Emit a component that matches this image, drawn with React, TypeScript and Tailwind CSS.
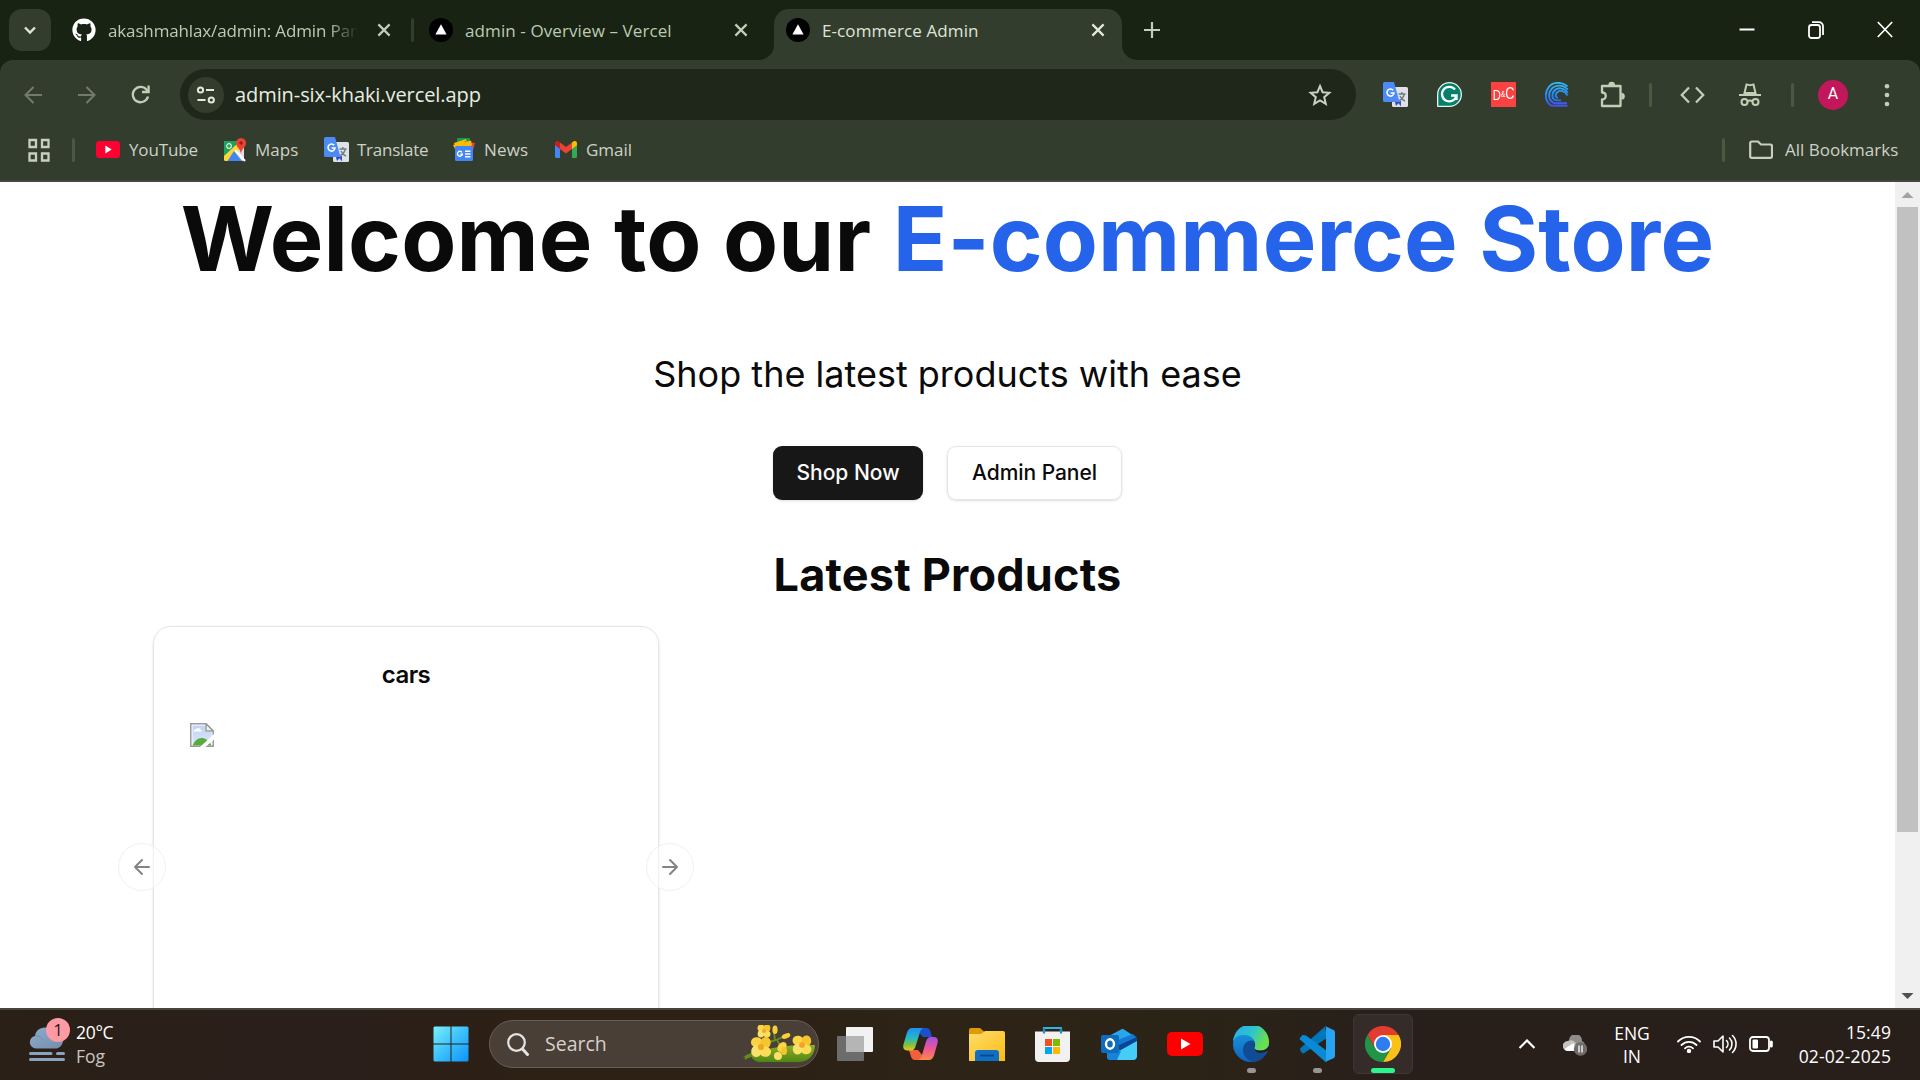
import React from "react";
import { FaGithub } from "react-icons/fa";

type Kids = { children: React.ReactNode };

function VercelMark() {
  return (
    <svg width="24" height="24" viewBox="0 0 24 24" className="shrink-0">
      <circle cx="12" cy="12" r="12" fill="#000" />
      <path d="M12 6.2 17.6 16.4H6.4Z" fill="#fff" />
    </svg>
  );
}

function Cross({ color }: { color: string }) {
  return (
    <svg width="18" height="18" viewBox="0 0 18 18" className="shrink-0" fill="none" stroke={color} strokeWidth="2.2">
      <path d="M3.4 3.4 14.6 14.6M14.6 3.4 3.4 14.6" />
    </svg>
  );
}

function TranslateIcon() {
  return (
    <svg width="25" height="25" viewBox="0 0 25 25" className="shrink-0">
      <rect x="9" y="5" width="16" height="20" rx="1.5" fill="#dfe1e5" />
      <path d="M14 19.5 18 24.5 18 19Z" fill="#3a53c5" />
      <path d="M15.500 12h7M18.800 10v2M21.300 12c-.6 3-3 5.500-5 6.500M17 14c1 2 2.500 4 5 5" stroke="#6b7c88" strokeWidth="1.400" fill="none" />
      <path d="M1.500 0H11l5.500 20H1.500A1.500 1.500 0 0 1 0 18.500V1.500A1.500 1.500 0 0 1 1.500 0Z" fill="#4c8bf5" />
      <path d="M12 20h4.500L13 24Z" fill="#3446c8" />
      <path d="M10.200 8.300A3.500 3.500 0 1 0 11 11H7.600" stroke="#fff" strokeWidth="1.600" fill="none" />
    </svg>
  );
}

function MapsIcon() {
  return (
    <svg width="22" height="24" viewBox="0 0 22 24" className="shrink-0">
      <rect x="0" y="3" width="20" height="20" rx="2" fill="#dfe1e5" />
      <path d="M2 3H14L16 9 3 21 0 21V5A2 2 0 0 1 2 3Z" fill="#1fa15d" />
      <path d="M0 18 13 6l4 4L4 23H2A2 2 0 0 1 0 21Z" fill="#fdd835" />
      <path d="M10 13 3.500 23H18Z" fill="#4285f4" />
      <path d="M11 12 21 23" stroke="#fff" strokeWidth="2" />
      <circle cx="5" cy="8" r="2.300" fill="none" stroke="#d7f0e1" strokeWidth="1.200" />
      <path d="M17 0a5 5 0 0 1 5 5.200C22 9 17.500 10.500 17 16 16.500 10.500 12 9 12 5.200A5 5 0 0 1 17 0Z" fill="#ea4335" />
      <circle cx="17" cy="5" r="1.800" fill="#961f17" />
    </svg>
  );
}

function NewsIcon() {
  return (
    <svg width="22" height="23" viewBox="0 0 22 23" className="shrink-0">
      <rect x="4" y="0" width="13" height="8" rx="1" fill="#0c9d58" />
      <path d="m1 5 12-4 2 6-12 4Z" fill="#fbbc04" />
      <path d="m12 3 10 2-2 7-9-2Z" fill="#ea4335" />
      <path d="m0 7 18-4.500 1 5L2 11Z" fill="#fbbc04" />
      <rect x="2" y="8" width="18" height="15" rx="1.500" fill="#4285f4" />
      <path d="M9 14.300A2.500 2.500 0 1 0 9.400 16.200H7.300M12 13.300h5.500M12 16h5.500M12 18.700h5.500" stroke="#fff" strokeWidth="1.400" fill="none" />
    </svg>
  );
}

function GmailIcon() {
  return (
    <svg width="22" height="17" viewBox="0 0 22 17" className="shrink-0">
      <path d="M0 3v12.500A1.500 1.500 0 0 0 1.500 17H5V7Z" fill="#4285f4" />
      <path d="M22 3v12.500a1.500 1.500 0 0 1-1.500 1.500H17V7Z" fill="#34a853" />
      <path d="M17 1.500V8l5-3.800V2.200C22 .3 19.800-.7 18.300.5Z" fill="#fbbc04" />
      <path d="M5 8V1.500L11 6l6-4.500V8l-6 4.600Z" fill="#ea4335" />
      <path d="M0 2.200v2L5 8V1.500L3.700.5C2.200-.7 0 .3 0 2.200Z" fill="#c5221f" />
    </svg>
  );
}

function YouTubeIcon({ w, h, color }: { w: number; h: number; color: string }) {
  return (
    <svg width={w} height={h} viewBox="0 0 36 24" preserveAspectRatio="none" className="shrink-0">
      <rect width="36" height="24" rx="5" fill={color} />
      <path d="M14 6.500 23.500 12 14 17.500Z" fill="#fff" />
    </svg>
  );
}

function Bookmark({ children, className }: Kids & { className: string }) {
  return <span className={"whitespace-nowrap text-[#ccd2c6] " + className}>{children}</span>;
}

function TabStrip() {
  return (
    <div className="flex h-[60px] shrink-0 items-center bg-[#182313] pl-[9px] text-[17px] leading-6">
      <div className="flex h-[42px] w-[42px] items-center justify-center rounded-[13px] bg-[#333d2d]">
        <svg width="16" height="16" viewBox="0 0 16 16" fill="none" stroke="#dfe4d8" strokeWidth="2.400">
          <path d="m3 5.500 5 5 5-5" />
        </svg>
      </div>
      <FaGithub className="ml-[21px] h-6 w-6 shrink-0 text-white" />
      <span className="ml-3 w-[250px] overflow-hidden whitespace-nowrap pt-[2px] tracking-[-0.14px] text-[#bccbb2] [mask-image:linear-gradient(90deg,#000_88%,transparent_100%)]">
        akashmahlax/admin: Admin Panel
      </span>
      <span className="ml-[17px]">
        <Cross color="#c0cfb6" />
      </span>
      <span className="ml-[18px] h-6 w-[3px] rounded bg-[#333d2d]" />
      <span className="ml-[15px]">
        <VercelMark />
      </span>
      <span className="ml-3 w-[267px] whitespace-nowrap pt-[2px] tracking-[0.1px] text-[#bccbb2]">admin - Overview – Vercel</span>
      <Cross color="#c0cfb6" />
      <div className="relative ml-6 mt-[9px] flex h-[51px] w-[348px] items-center rounded-t-[15px] bg-[#333d2d] pb-[9px] pl-3">
        <svg className="absolute -left-[15px] bottom-0" width="15" height="15" viewBox="0 0 15 15">
          <path d="M15 0v15H0A15 15 0 0 0 15 0Z" fill="#333d2d" />
        </svg>
        <svg className="absolute -right-[15px] bottom-0" width="15" height="15" viewBox="0 0 15 15">
          <path d="M0 0v15h15A15 15 0 0 1 0 0Z" fill="#333d2d" />
        </svg>
        <VercelMark />
        <span className="ml-3 w-[267px] whitespace-nowrap pt-[2px] tracking-[0.1px] text-[#dfe4d8]">E-commerce Admin</span>
        <Cross color="#e4e9dd" />
      </div>
      <svg className="ml-[21px]" width="18" height="18" viewBox="0 0 18 18" stroke="#c0cfb6" strokeWidth="2.200">
        <path d="M9 1v16M1 9h16" />
      </svg>
      <div className="ml-auto mr-[1px] flex">
        <div className="flex w-[69px] justify-center">
          <svg width="16" height="18" viewBox="0 0 16 18"><path d="M.5 8.500h15" stroke="#fff" strokeWidth="2" /></svg>
        </div>
        <div className="flex w-[69px] justify-center">
          <svg width="16" height="18" viewBox="0 0 16 18" fill="none" stroke="#fff" strokeWidth="1.800">
            <rect x="1" y="4" width="11" height="13" rx="2.500" />
            <path d="M4 1.200h7a4 4 0 0 1 4 4V14" />
          </svg>
        </div>
        <div className="flex w-[69px] justify-center">
          <svg width="16" height="18" viewBox="0 0 16 18" stroke="#fff" strokeWidth="1.700">
            <path d="M.8 1 15.200 16M15.200 1 .8 16" />
          </svg>
        </div>
      </div>
    </div>
  );
}

function Toolbar() {
  return (
    <div className="flex h-[69px] items-center">
      <svg className="ml-6" width="18" height="18" viewBox="0 0 18 18" fill="none" stroke="#737c6c" strokeWidth="2">
        <path d="M18 9H1.500M9.500 1 1.500 9l8 8" />
      </svg>
      <svg className="ml-9" width="18" height="18" viewBox="0 0 18 18" fill="none" stroke="#737c6c" strokeWidth="2">
        <path d="M0 9h16.500M8.500 1l8 8-8 8" />
      </svg>
      <svg className="ml-[35px]" width="19" height="19" viewBox="0 0 19 19" fill="none" stroke="#c0cfb6" strokeWidth="2.300">
        <path d="M17 11.500A7.700 7.700 0 1 1 15.500 4.600L17 6.500" />
        <path d="M17.600.5V7H11" />
      </svg>
      <div className="ml-[30px] flex h-[51px] w-[1176px] items-center rounded-full bg-[#1e2719] pl-2">
        <div className="flex h-9 w-9 items-center justify-center rounded-full bg-[#333d2d]">
          <svg width="20" height="18" viewBox="0 0 20 18" fill="none" stroke="#e4e9dd" strokeWidth="2">
            <circle cx="4.500" cy="4" r="2.600" />
            <path d="M10 4h8M1.500 14h8" />
            <circle cx="15.300" cy="14" r="2.600" />
          </svg>
        </div>
        <span className="ml-[11px] text-[20px] leading-7 tracking-[-0.08px] text-[#e8ede2]">admin-six-khaki.vercel.app</span>
        <svg className="ml-auto mr-6" width="24" height="24" viewBox="0 0 24 24" fill="none" stroke="#c9d1c2" strokeWidth="2">
          <path d="m12 3 2.600 6.200 6.700.6-5.100 4.400 1.600 6.600-5.800-3.500-5.800 3.500 1.600-6.600-5.100-4.400 6.700-.6Z" />
        </svg>
      </div>
      <span className="ml-[27px]"><TranslateIcon /></span>
      <svg className="ml-[29px]" width="25" height="25" viewBox="0 0 25 25">
        <path d="M12.500 0A12.500 12.500 0 1 1 12.500 25H1a1 1 0 0 1-1-1V12.500A12.500 12.500 0 0 1 12.500 0Z" fill="#e8f3f0" />
        <path d="M12.500 1.300A11.200 11.200 0 1 1 12.500 23.700H1.300V12.500A11.200 11.200 0 0 1 12.500 1.300Z" fill="#04806d" />
        <path d="M18 7.500A7.300 7.300 0 1 0 19.500 13.500H14M19.500 13v5" fill="none" stroke="#fff" strokeWidth="2.300" />
      </svg>
      <div className="ml-[29px] flex h-[25px] w-[25px] items-center justify-center bg-[#fa4341]">
        <span className="flex scale-x-75 items-center font-['Liberation_Sans'] text-[15px] leading-none text-white">
          D<span className="text-[9px]">&amp;</span><span className="-mt-[2px] text-[17px]">C</span>
        </span>
      </div>
      <svg className="ml-[29px]" width="24" height="25" viewBox="0 0 24 25" fill="none" strokeWidth="1.900">
        <defs>
          <linearGradient id="swirl" x1="0" y1="0" x2="0" y2="25" gradientUnits="userSpaceOnUse">
            <stop offset="0" stopColor="#35bdf3" />
            <stop offset=".6" stopColor="#2380fa" />
            <stop offset="1" stopColor="#4b49ef" />
          </linearGradient>
        </defs>
        <g stroke="url(#swirl)">
          <path d="M22.500 4.500C17-.5 8-.3 3.800 5 -.8 11-.2 19.500 6.500 23.800H22.500" />
          <path d="M22.800 7.500C18 2.300 10.500 2.500 6.500 7 2.500 12 3.500 18.800 9.500 21.200H22" />
          <path d="M22.800 10.800C19 5.300 12.500 5 9 9 6 12.500 7 17.500 11.500 18.400H16" />
          <path d="M22.500 13.500C20 8.800 15 7.500 12 10.500 9.500 13 10.500 15.700 13 15.700" />
        </g>
      </svg>
      <svg className="ml-[30px]" width="27" height="27" viewBox="0 0 27 27" fill="none" stroke="#c0cfb6" strokeWidth="2.300">
        <path d="M3 5h18.500v20H3v-6.500c5 0 5-7 0-7Z" strokeLinejoin="round" />
        <path d="M10.500 4a2.200 2.200 0 0 1 4.400 0M22.500 13a2.200 2.200 0 0 1 0 4.400" fill="#c0cfb6" />
      </svg>
      <span className="ml-[23px] h-6 w-[3px] rounded bg-[#4b5943]" />
      <svg className="ml-[28px]" width="25" height="18" viewBox="0 0 25 18" fill="none" stroke="#c0cfb6" strokeWidth="2.300">
        <path d="M9 1.500 1.800 9 9 16.500M16 1.500 23.200 9 16 16.500" />
      </svg>
      <svg className="ml-[34px]" width="22" height="24" viewBox="0 0 22 24" fill="none" stroke="#c0cfb6" strokeWidth="2">
        <path d="M0 12h22M5.500 10 7.500 1.500c2 0 2 .8 3.500.8s1.500-.8 3.500-.8l2 8.500Z" />
        <circle cx="5.500" cy="19" r="3" />
        <circle cx="16.500" cy="19" r="3" />
        <path d="M8.500 18.500c1.500-1.200 3.500-1.200 5 0" />
      </svg>
      <span className="ml-[30px] h-6 w-[3px] rounded bg-[#4b5943]" />
      <span className="ml-6 flex h-[30px] w-[30px] items-center justify-center rounded-full bg-[#c2185b] pb-px font-[Roboto] text-[16px] text-white">A</span>
      <svg className="ml-9" width="6" height="24" viewBox="0 0 6 24" fill="#c0cfb6">
        <circle cx="3" cy="3.300" r="2.300" />
        <circle cx="3" cy="12" r="2.300" />
        <circle cx="3" cy="21" r="2.300" />
      </svg>
    </div>
  );
}

function BookmarksBar() {
  return (
    <div className="flex h-[41px] items-center pl-7 pr-[22px] text-[17px] leading-6">
      <svg width="22" height="26" viewBox="0 0 22 26" fill="none" stroke="#c8cec2" strokeWidth="2.300">
        <path d="M1.500 3h6.500v7H1.500ZM14 3h6.500v7H14ZM1.500 16.500h6.500v7H1.500ZM14 16.500h6.500v7H14Z" />
      </svg>
      <span className="ml-[22px] h-6 w-[3px] rounded bg-[#4b5943]" />
      <span className="ml-[21px]"><YouTubeIcon w={24} h={17} color="#ff0033" /></span>
      <Bookmark className="ml-[9px] w-[95px] tracking-[-0.15px]">YouTube</Bookmark>
      <MapsIcon />
      <Bookmark className="ml-[9px] w-[69px]">Maps</Bookmark>
      <TranslateIcon />
      <Bookmark className="ml-[8px] w-[96px] tracking-[-0.25px]">Translate</Bookmark>
      <NewsIcon />
      <Bookmark className="ml-[9px] w-[71px] tracking-[0.2px]">News</Bookmark>
      <GmailIcon />
      <Bookmark className="ml-[9px]">Gmail</Bookmark>
      <span className="ml-auto h-6 w-[3px] rounded bg-[#4b5943]" />
      <svg className="ml-6" width="24" height="19" viewBox="0 0 24 19" fill="none" stroke="#c8cec2" strokeWidth="2.200">
        <path d="M1.200 3a1.500 1.500 0 0 1 1.500-1.500H9L12 4.500h9.500A1.500 1.500 0 0 1 23 6v10.300a1.500 1.500 0 0 1-1.500 1.500H2.700a1.500 1.500 0 0 1-1.500-1.500Z" />
      </svg>
      <Bookmark className="ml-3 w-[113px]">All Bookmarks</Bookmark>
    </div>
  );
}

function ArrowButton({ flip, className }: { flip?: boolean; className: string }) {
  return (
    <div className={"absolute top-[217px] flex h-12 w-12 items-center justify-center rounded-full border border-[#f1f1f1] bg-white/50 " + className}>
      <svg width="24" height="24" viewBox="0 0 24 24" fill="none" stroke="#848484" strokeWidth="2" strokeLinecap="round" strokeLinejoin="round" className={flip ? "rotate-180" : ""}>
        <path d="m12 19-7-7 7-7M19 12H5" />
      </svg>
    </div>
  );
}

function BrokenImage() {
  return (
    <svg width="24" height="24" viewBox="0 0 24 24">
      <defs>
        <linearGradient id="sky" x1="0" y1="0" x2="0" y2="1">
          <stop offset="0" stopColor="#bfd3f5" />
          <stop offset="1" stopColor="#dbe6fb" />
        </linearGradient>
      </defs>
      <path d="M.8.8H16l7.200 7.200v15.200H.8Z" fill="#fff" stroke="#9b9b9b" strokeWidth="1.500" />
      <path d="M2.500 2.500H15V9h6.500v12.500h-19Z" fill="url(#sky)" />
      <path d="M3.500 8.500a2 2 0 0 1 2-2 2.800 2.800 0 0 1 5 0 1.800 1.800 0 0 1 1 2Z" fill="#fff" />
      <path d="M2.500 22.500c2-4.500 5-7.500 9-7.500s7 2 10 7.500Z" fill="#5aab3d" />
      <path d="M16 .8V8h7.200Z" fill="#f2f2f2" stroke="#9b9b9b" strokeWidth="1.500" />
      <path d="M10 24 24 11v5.500L15.500 24Z" fill="#fff" />
    </svg>
  );
}

function Page() {
  return (
    <div className="flex h-[826px] shrink-0 overflow-hidden bg-white font-[Inter] text-[#0a0a0a]">
      <main className="flex w-[1895px] flex-col items-center pt-[12px]">
        <h1 className="whitespace-nowrap text-[90px] font-bold leading-[90px] tracking-[0.13px]">
          Welcome to our <span className="text-[#2563eb]">E-commerce Store</span>
        </h1>
        <p className="mt-[66px] whitespace-nowrap text-[36px] leading-[48px]">Shop the latest products with ease</p>
        <div className="mt-12 flex gap-6 text-[21px] font-medium">
          <div className="flex h-[54px] w-[150px] items-center justify-center rounded-[9px] bg-[#171717] text-[#fafafa] shadow">Shop Now</div>
          <div className="flex h-[54px] w-[175px] items-center justify-center rounded-[9px] border border-[#e5e5e5] tracking-[-0.05px] shadow-sm">Admin Panel</div>
        </div>
        <h2 className="mt-12 text-[45px] font-bold leading-[54px] tracking-[0.2px]">Latest Products</h2>
        <div className="relative ml-[153px] mt-6 w-[506px] self-start">
          <div className="h-[600px] rounded-[18px] border border-[#e5e5e5] px-9 pt-9 shadow">
            <div className="text-center text-[24px] font-semibold leading-6 tracking-[-0.6px]">cars</div>
            <div className="mt-9"><BrokenImage /></div>
          </div>
          <ArrowButton className="-left-[35px]" />
          <ArrowButton flip className="-right-[35px]" />
        </div>
      </main>
      <div className="flex w-[25px] flex-col items-center bg-[#f0f0f0]">
        <svg width="25" height="25" viewBox="0 0 25 25"><path d="M12.500 10 18.500 16H6.500Z" fill="#a3a3a3" /></svg>
        <div className="h-[625px] w-[21px] bg-[#c1c1c1]" />
        <svg className="mt-auto" width="25" height="25" viewBox="0 0 25 25"><path d="M12.500 16 18.500 10H6.500Z" fill="#505050" /></svg>
      </div>
    </div>
  );
}

function Petals({ x, y, s }: { x: number; y: number; s: number }) {
  return (
    <g transform={`translate(${x} ${y}) scale(${s})`}>
      <ellipse cx="-4.500" cy="-3.500" rx="5.500" ry="4.800" fill="#fbd545" transform="rotate(10)" />
      <ellipse cx="-4.500" cy="-3.500" rx="5.500" ry="4.800" fill="#f5c52d" transform="rotate(100)" />
      <ellipse cx="-4.500" cy="-3.500" rx="5.500" ry="4.800" fill="#fbdc58" transform="rotate(190)" />
      <ellipse cx="-4.500" cy="-3.500" rx="5.500" ry="4.800" fill="#fbe06a" transform="rotate(280)" />
      <circle r="2.800" fill="#f3a324" />
    </g>
  );
}

function Flowers() {
  return (
    <svg width="72" height="38" viewBox="0 0 72 38" className="shrink-0">
      <defs>
        <linearGradient id="hill" x1="0" y1="0" x2="0" y2="1">
          <stop offset="0" stopColor="#8fae22" />
          <stop offset="1" stopColor="#4f8614" />
        </linearGradient>
      </defs>
      <path d="M8 31C22 22 44 20 72 20 72 28 67 37 56 37H18C13 37 10 35 8 31Z" fill="url(#hill)" />
      <path d="M0 32C4 29 7 28 10 29L7 33Z" fill="#5b8a1a" />
      <path d="M2 34C14 24 22 17 33 15M33 15 45 10M32 15 31 7M38 22 34 15" stroke="#648e22" strokeWidth="1.800" fill="none" />
      <Petals x={18} y={22} s={1.080} />
      <Petals x={59} y={20} s={1.020} />
      <Petals x={21} y={6} s={0.700} />
      <ellipse cx="32" cy="4.800" rx="2.600" ry="4.300" fill="#f7cf3a" />
      <ellipse cx="43" cy="11" rx="4.500" ry="2.400" fill="#f7cf3a" transform="rotate(-20 43 11)" />
      <ellipse cx="39" cy="22" rx="5.500" ry="4" fill="#fbd545" transform="rotate(-50 39 22)" />
      <ellipse cx="35" cy="31" rx="4" ry="4" fill="#fbe06a" />
      <ellipse cx="41" cy="26" rx="3" ry="4" fill="#f5c52d" />
    </svg>
  );
}

function TaskApp({ children, className = "" }: Kids & { className?: string }) {
  return <div className={"relative flex h-[60px] w-[60px] items-center justify-center " + className}>{children}</div>;
}

function TaskIcons() {
  return (
    <div className="ml-[6px] flex gap-[6px]">
      <TaskApp>
        <svg width="36" height="34" viewBox="0 0 36 34">
          <rect x="9" y="0" width="27" height="25" rx="1" fill="#f2f2f2" />
          <rect x="0" y="9" width="27" height="25" rx="1" fill="#6c6c6c" />
          <path d="M9 9h18v16H9Z" fill="#b5b5b5" />
        </svg>
      </TaskApp>
      <TaskApp>
        <svg width="35" height="32" viewBox="0 0 35 32" className="-ml-px">
          <defs>
            <linearGradient id="cpa" x1="0" y1="0" x2="0" y2="1">
              <stop offset="0" stopColor="#1f8ff5" /><stop offset=".45" stopColor="#25b8c4" /><stop offset=".75" stopColor="#7cc242" /><stop offset="1" stopColor="#f0c419" />
            </linearGradient>
            <linearGradient id="cpb" x1="0" y1="0" x2="0" y2="1">
              <stop offset="0" stopColor="#a34fe6" /><stop offset=".5" stopColor="#ee5596" /><stop offset="1" stopColor="#f98a4a" />
            </linearGradient>
          </defs>
          <path d="M15 0h8c3 0 4 2 4.600 4l1.400 5h-9L15 3Z" fill="#1b4fcd" />
          <path d="M20 32h-8c-2.500 0-3.600-2-4.200-4L6 22h9l5 6Z" fill="#f2603a" />
          <path d="M9 0h13c-3.500 0-4.500 2.500-5.300 5l-4 13c-.8 2.500-2 4.500-5 4.500H4C0 22.500-.3 19 .6 16L4 4.500C5 1.800 6.500 0 9 0Z" fill="url(#cpa)" />
          <path d="M26 32H14c3 0 4.300-2.500 5-5l4-13.500C24 11 25 9 28 9h3c4 0 4.300 3.500 3.400 6.500L31 27.500C30 30.200 28.500 32 26 32Z" fill="url(#cpb)" />
        </svg>
      </TaskApp>
      <TaskApp>
        <svg width="36" height="33" viewBox="0 0 36 33">
          <defs><linearGradient id="fold" x1="0" y1="0" x2="1" y2="1"><stop offset="0" stopColor="#ffdc6b" /><stop offset="1" stopColor="#fbbd16" /></linearGradient></defs>
          <path d="M0 2a2 2 0 0 1 2-2h9l4 3.500V10H0Z" fill="#dd9c05" />
          <path d="M0 6h12l4-3h18a2 2 0 0 1 2 2v28H0Z" fill="url(#fold)" />
          <path d="M6 33V25a3 3 0 0 1 3-3h18a3 3 0 0 1 3 3v8Z" fill="#0f6fc5" />
          <path d="M11 27.500h14" stroke="#0a4a8c" strokeWidth="1.800" />
        </svg>
      </TaskApp>
      <TaskApp>
        <svg width="35" height="35" viewBox="0 0 35 35" className="-ml-px">
          <path d="M9 7V1h17v6" fill="none" stroke="#2fb4ea" strokeWidth="2.200" />
          <path d="M0 4.500h35V31a4 4 0 0 1-4 4H4a4 4 0 0 1-4-4Z" fill="#f1f1f1" />
          <path d="M9 1v5.500M26 1v5.500" stroke="#1d8fc9" strokeWidth="2.200" />
          <path d="M10 12h7v7h-7Z" fill="#f25022" /><path d="M18 12h7v7h-7Z" fill="#7fba00" /><path d="M10 20h7v7h-7Z" fill="#00a4ef" /><path d="M18 20h7v7h-7Z" fill="#ffb900" />
        </svg>
      </TaskApp>
      <TaskApp>
        <svg width="36" height="31" viewBox="0 0 36 31">
          <path d="M6 8 20 .5c1-.6 2-.6 3 0L36 9v8L20 24 6 14Z" fill="#28a8ea" />
          <path d="M14 12 32 5l4 4-18 13Z" fill="#1279d4" /><path d="M16 17 36 8v5L20 23Z" fill="#0a4595" />
          <path d="M6 14v13a4 4 0 0 0 4 4h22a4 4 0 0 0 4-4V12L18 22Z" fill="#45cdf7" />
          <path d="M6 18v9a4 4 0 0 0 4 4h6l4-9Z" fill="#1683d8" />
          <rect x="0" y="6" width="18" height="18" rx="2" fill="#0f6cbd" />
          <ellipse cx="9" cy="15" rx="4" ry="4.700" fill="none" stroke="#fff" strokeWidth="2.400" />
        </svg>
      </TaskApp>
      <TaskApp><YouTubeIcon w={36} h={24} color="#ff0000" /></TaskApp>
      <TaskApp>
        <svg width="36" height="36" viewBox="0 0 36 36">
          <defs>
            <linearGradient id="eda" x1="0" y1="0" x2="1" y2=".4"><stop offset="0" stopColor="#2aa9ea" /><stop offset=".55" stopColor="#2cc3d0" /><stop offset="1" stopColor="#6be04a" /></linearGradient>
            <linearGradient id="edb" x1="0" y1="0" x2="0" y2="1"><stop offset="0" stopColor="#1b9de2" /><stop offset="1" stopColor="#0f63bd" /></linearGradient>
          </defs>
          <circle cx="18" cy="18" r="18" fill="url(#edb)" />
          <path d="M0 16A18 18 0 0 1 36 16.500C36 22 32 24.500 27.500 24.500 23 24.500 20.500 23 21.500 21 24 17 20 9.500 12 9 6 8.700 1.500 11 0 16Z" fill="url(#eda)" />
          <path d="M10 24c0-6 4-10 9-9.500 2 0 3.500 2 3 4.500C19 25 24 28.500 34.500 26 32 31 27 35.500 20 36 14 34 10 29 10 24Z" fill="#114b94" />
          <path d="M22 17.500C19.500 22 22 27 27.500 27c3 0 6-1 8.500-3L36 20C33 24 30 24.500 27.500 24.500 23 24.500 20.500 23 21.500 21Z" fill="#261f1b" />
        </svg>
        <span className="absolute bottom-[1px] h-[5px] w-[9px] rounded-full bg-[#9a9592]" />
      </TaskApp>
      <TaskApp>
        <svg width="36" height="36" viewBox="0 0 36 36">
          <path d="M1 22.500 26 .5 28 12 4.500 27.500Q1.500 27 1 22.500Z" fill="#0077b9" />
          <path d="M.6 12.500 3.500 9 7 9.500 28 25v10.500L26 35.500 1 13.500Z" fill="#0a8ad6" />
          <path d="M26 0 34.500 4A2.500 2.500 0 0 1 36 6v24a2.500 2.500 0 0 1-1.500 2.200L26 36l1-1.500V1.500Z" fill="#27a3f2" />
        </svg>
        <span className="absolute bottom-[1px] h-[5px] w-[9px] rounded-full bg-[#9a9592]" />
      </TaskApp>
      <TaskApp className="rounded-md border border-[#403734] bg-[#352c2a]">
        <svg width="36" height="36" viewBox="0 0 36 36">
          <path d="M2.400 9A18 18 0 0 1 33.600 9H18L10.200 22.500Z" fill="#e33b2e" />
          <path d="M33.600 9A18 18 0 0 1 18 36L25.800 22.500 18 9Z" fill="#fbc116" />
          <path d="M2.400 9A18 18 0 0 0 18 36L25.800 22.500H10.200Z" fill="#229447" />
          <circle cx="18" cy="18" r="9" fill="#fff" />
          <circle cx="18" cy="18" r="7.200" fill="#2f7cf0" />
        </svg>
        <span className="absolute bottom-0 h-[5px] w-6 rounded-full bg-[#2bf58b]" />
      </TaskApp>
    </div>
  );
}

function Taskbar() {
  return (
    <div className="flex h-[72px] shrink-0 items-center border-t-2 border-[#4a443e] bg-[linear-gradient(90deg,#2b2017_0%,#2a1f1b_17%,#2d2015_27%,#2d2116_40%,#2d2417_52%,#2c2317_62%,#281f1b_72%,#281e1a_100%)] pb-[2px] text-[17.5px] leading-6 text-white">
      <div className="relative ml-[29px] h-9 w-9">
        <svg width="36" height="36" viewBox="0 0 36 36">
          <defs><linearGradient id="fog" x1="0" y1="0" x2="1" y2="1"><stop offset="0" stopColor="#8faccd" /><stop offset="1" stopColor="#748cab" /></linearGradient></defs>
          <path d="M6 10a9.500 9.500 0 0 1 18-3 8 8 0 0 1 4 15.500H7A6.300 6.300 0 0 1 6 10Z" fill="url(#fog)" />
          <path d="M6.500 9.800A6.500 6.500 0 0 1 14 15" stroke="#6f8fb4" fill="none" />
          <path d="M1.500 27.500h20.500M28.500 27.500h6M1.500 33.500h33" stroke="#8aa2bf" strokeWidth="3" strokeLinecap="round" />
        </svg>
        <span className="absolute -top-[8px] left-[17px] flex h-6 w-6 items-center justify-center rounded-full bg-[#ff99a4] text-[17px] text-[#2b1a1a]">1</span>
      </div>
      <div className="ml-[11px] flex w-[346px] flex-col">
        <span className="tracking-[-0.3px]">20°C</span>
        <span className="text-[#c9c5c2]">Fog</span>
      </div>
      <svg className="ml-[11px]" width="36" height="36" viewBox="0 0 36 36">
        <defs><linearGradient id="win" x1="0" y1="0" x2="36" y2="36" gradientUnits="userSpaceOnUse"><stop offset="0" stopColor="#7af3fd" /><stop offset=".5" stopColor="#3cc0fc" /><stop offset="1" stopColor="#0a93fb" /></linearGradient></defs>
        <path d="M1.500.5H17.500V17.500H.5V1.500ZM18.500.5H34.500L35.500 1.500V17.500H18.500ZM.5 18.500H17.500V35.500H1.500L.5 34.500ZM18.500 18.500H35.500V34.500L34.500 35.500H18.500Z" fill="url(#win)" />
      </svg>
      <div className="ml-[20px] flex h-12 w-[330px] items-center rounded-full border border-[#675d56] bg-[#4a3f37] pl-[17px] text-[19.5px] text-[#d6d1cd]">
        <svg width="22" height="23" viewBox="0 0 22 23" fill="none" stroke="#e6e4e3" strokeLinecap="round">
          <circle cx="9.500" cy="9.500" r="8.300" strokeWidth="2.200" />
          <path d="m15.500 16 5 5.500" strokeWidth="3" />
        </svg>
        <span className="ml-4 w-[198px]">Search</span>
        <Flowers />
      </div>
      <TaskIcons />
      <svg className="ml-[106px]" width="16" height="10" viewBox="0 0 16 10" fill="none" stroke="#fff" strokeWidth="2.200">
        <path d="M.5 9 8 1.500 15.500 9" />
      </svg>
      <svg className="ml-7 mt-[3px]" width="24" height="21" viewBox="0 0 24 21">
        <path d="M6 5a6.500 6.500 0 0 1 13 1 5 5 0 0 1 3 4L9 12Z" fill="#8f8b89" />
        <path d="M5 16A5 5 0 0 1 4.500 6a7 7 0 0 1 8 1.500L15 16Z" fill="#c4c1c0" />
        <path d="m1.500 14 9-6L14 16H5A5 5 0 0 1 1.500 14Z" fill="#fff" />
        <circle cx="17.500" cy="14" r="6.700" fill="#6f6c6b" />
        <path d="M16 10.500v7M19 10.500v7" stroke="#fff" strokeWidth="1.300" />
      </svg>
      <div className="ml-[27px] flex w-[36px] flex-col pt-[2px] text-center leading-[23px]">
        <span>ENG</span>
        <span>IN</span>
      </div>
      <svg className="ml-[27px]" width="24" height="18" viewBox="0 0 24 18" fill="none" stroke="#fff" strokeWidth="1.800" strokeLinecap="round">
        <path d="M1 6.500A15.500 15.500 0 0 1 23 6.500M4.500 10A10.600 10.600 0 0 1 19.500 10M8 13.300A5.800 5.800 0 0 1 16 13.300" />
        <circle cx="12" cy="16" r="1.300" fill="#fff" />
      </svg>
      <svg className="ml-3" width="24" height="20" viewBox="0 0 24 20" fill="none" stroke="#fff" strokeWidth="1.600" strokeLinecap="round" strokeLinejoin="round">
        <path d="M1 7h4l5-5v16l-5-5H1ZM13.500 6.500a5 5 0 0 1 0 7M16.500 4a8.500 8.500 0 0 1 0 12M19.500 1.500a12 12 0 0 1 0 17" />
      </svg>
      <svg className="ml-3" width="24" height="16" viewBox="0 0 24 16" fill="none" stroke="#fff" strokeWidth="1.800">
        <rect x="1" y="1" width="19" height="14" rx="3" />
        <rect x="3.500" y="3.500" width="5.500" height="9" rx="1" fill="#fff" stroke="none" />
        <path d="M22.300 6v4" strokeWidth="3" strokeLinecap="round" />
      </svg>
      <div className="ml-auto mr-[29px] flex flex-col text-right tracking-[0.1px]">
        <span>15:49</span>
        <span>02-02-2025</span>
      </div>
    </div>
  );
}

export default function App() {
  return (
    <div className="flex h-[1080px] w-[1920px] flex-col overflow-hidden bg-[#182313] font-['Open_Sans',sans-serif]">
      <TabStrip />
      <div className="flex h-[122px] shrink-0 flex-col rounded-t-[13px] border-b-2 border-[#42493c] bg-[#333d2d]">
        <Toolbar />
        <BookmarksBar />
      </div>
      <Page />
      <Taskbar />
    </div>
  );
}
